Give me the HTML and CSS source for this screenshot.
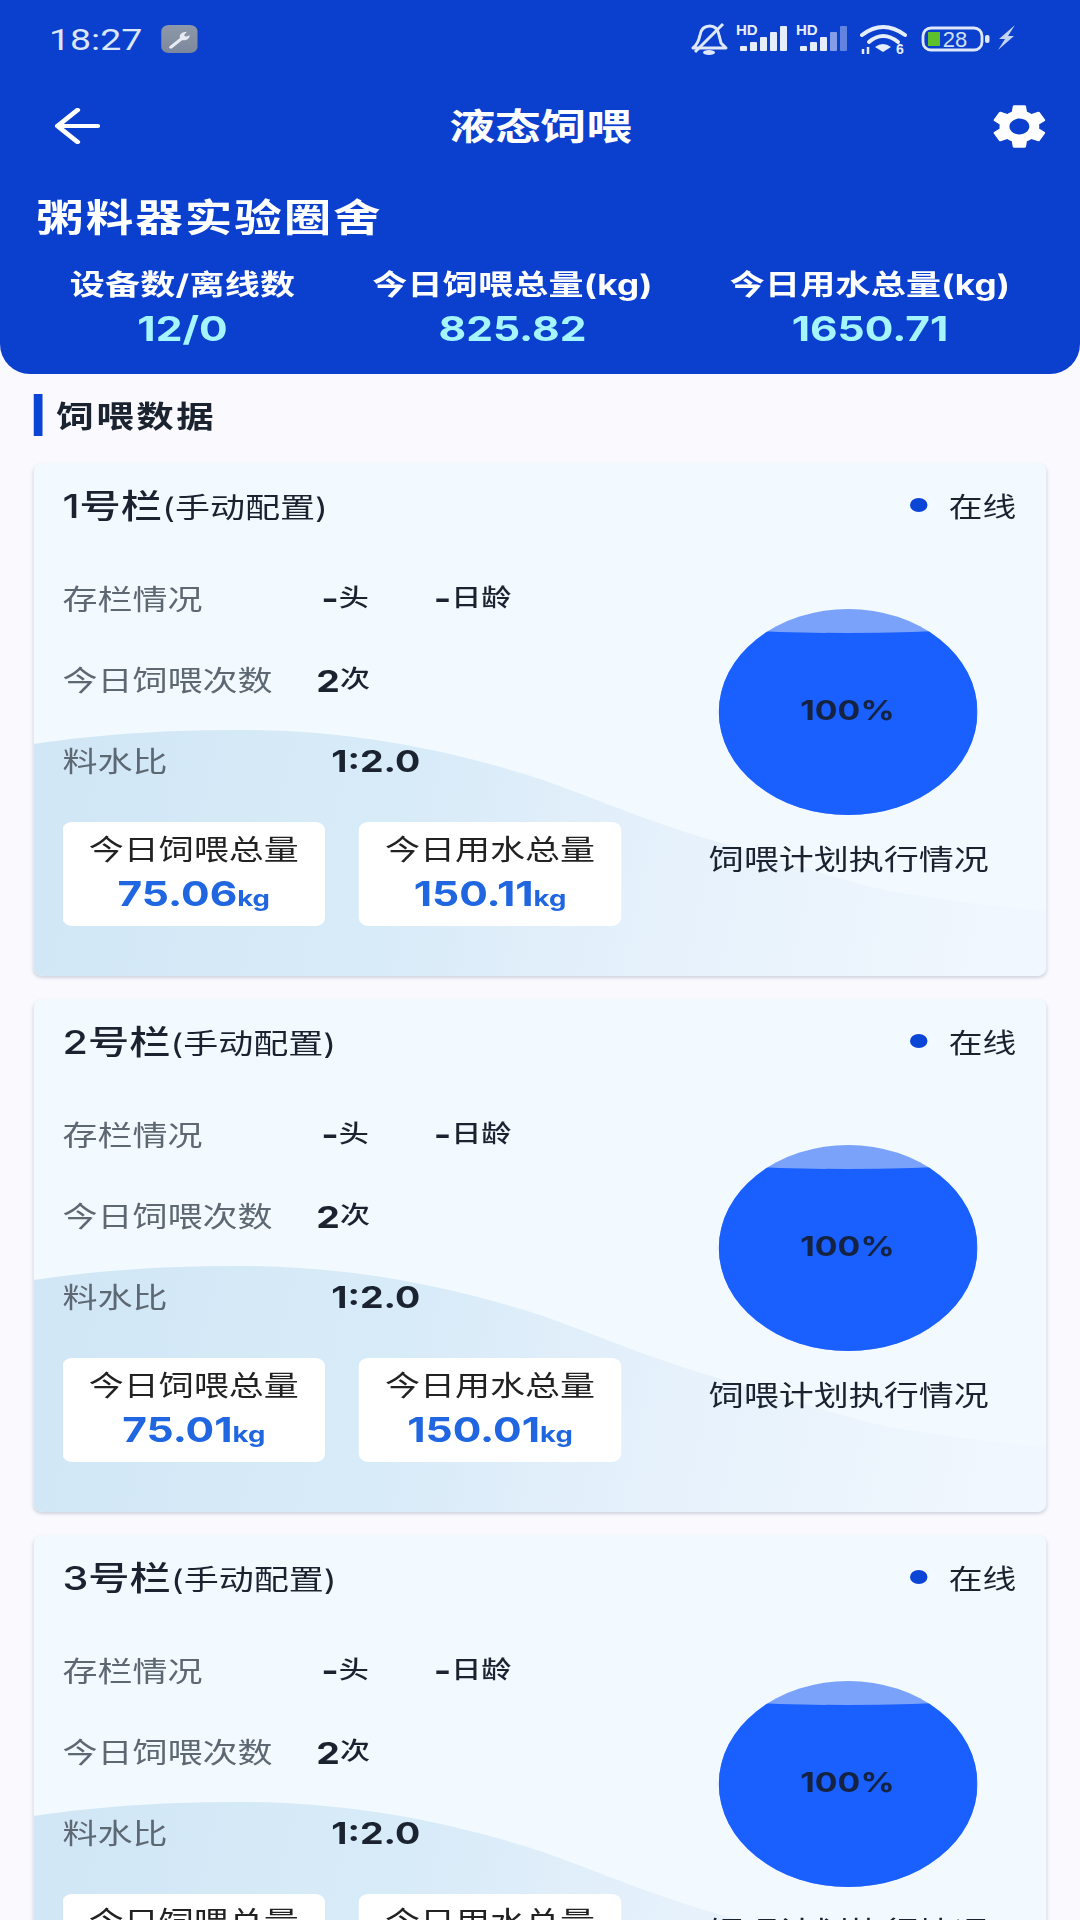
FILE: index.html
```html
<!DOCTYPE html>
<html>
  <head>
    <meta charset="utf-8">
    <title>液态饲喂</title>
    <link rel="stylesheet" href="styles.css">
  </head>

  <body>
    <div class="page">
      <div class="header">
        <div class="status-bar">
          <span class="time">18:27</span>
          <span class="tool-badge">
            <svg viewBox="0 0 24 24" width="22" height="22"><path d="M4 21 L13 12" stroke="#e8ecf2" stroke-width="3" stroke-linecap="round"/><path d="M12 11 C11 7 14 4 18 4 L15.5 7.5 L17 9.5 L20.5 8 C20.5 12 17 14.5 13.5 13 Z" fill="#e8ecf2"/></svg>
          </span>
          <svg class="status-icons" viewBox="0 0 330 36" preserveAspectRatio="none">
            <g fill="none" stroke="#dfe8fa" stroke-width="3" stroke-linejoin="round">
              <path d="M3 27 C8 23 9 19 10 14 C11 8 15 5 20 5 C25 5 28 9 29 14 L31 22 L36 27 Z"/>
              <path d="M5 31 L33 3"/>
            </g>
            <ellipse cx="19" cy="31.500" rx="6" ry="2.500" fill="#dfe8fa"/>

            <g fill="#e6edfb">
              <text class="hd" x="46" y="14">HD</text>
              <rect x="50" y="25" width="7" height="5" rx="1"/>
              <rect x="60" y="21" width="7" height="9" rx="1"/>
              <rect x="70" y="16" width="7" height="14" rx="1"/>
              <rect x="80" y="11" width="7" height="19" rx="1"/>
              <rect x="90" y="5" width="7" height="25" rx="1"/>
              <text class="hd" x="106" y="14">HD</text>
              <rect x="110" y="25" width="7" height="5" rx="1"/>
              <rect x="120" y="21" width="7" height="9" rx="1"/>
              <rect x="130" y="16" width="7" height="14" rx="1"/>
              <rect x="140" y="11" width="7" height="19" rx="1" opacity=".55"/>
              <rect x="150" y="5" width="7" height="25" rx="1" opacity=".4"/>
            </g>

            <g fill="none" stroke="#e6edfb" stroke-width="4" stroke-linecap="round">
              <path d="M172 14 Q193 -2 215 14"/>
              <path d="M179 21 Q193 9 208 21"/>
            </g>
            <path d="M185 26 Q193 20 201 26 L193 31 Z" fill="#e6edfb"/>
            <path d="M173 33 V28 M178 33 V26" stroke="#e6edfb" stroke-width="2.500"/>
            <text class="wifi-six" x="206" y="33">6</text>

            <rect x="233" y="7" width="59" height="22" rx="8" fill="none" stroke="#dfe8fa" stroke-width="2.800"/>
            <rect x="238" y="11" width="12" height="14" fill="#5ec02a"/>
            <text class="batt-num" x="265" y="25.500">28</text>
            <rect x="295" y="14" width="4.500" height="8" rx="2" fill="#dfe8fa"/>
            <path d="M325 4 L309 18 L315 18 L308 29 L324 15 L318 15 Z" fill="#c3d3f3"/>
          </svg>
        </div>

        <div class="nav">
          <svg class="back" viewBox="0 0 36 36" width="36" height="36"><path d="M34 18 H2 M18 2 L2 18 L18 34" fill="none" stroke="#fff" stroke-width="4.200" stroke-linecap="round" stroke-linejoin="round"/></svg>
          <span class="nav-title">液态饲喂</span>
          <svg class="gear" viewBox="0 0 24 24" width="53" height="53"><path fill="#fff" d="M19.14 12.94c.04-.3.06-.61.06-.94 0-.32-.02-.64-.07-.94l2.03-1.58a.49.49 0 0 0 .12-.61l-1.92-3.32a.488.488 0 0 0-.59-.22l-2.39.96c-.5-.38-1.03-.7-1.62-.94l-.36-2.54a.484.484 0 0 0-.48-.41h-3.84c-.24 0-.43.17-.47.41l-.36 2.54c-.59.24-1.13.57-1.62.94l-2.39-.96c-.22-.08-.47 0-.59.22L2.74 8.87c-.12.21-.08.47.12.61l2.03 1.58c-.05.3-.09.63-.09.94s.02.64.07.94l-2.03 1.58a.49.49 0 0 0-.12.61l1.92 3.32c.12.22.37.29.59.22l2.39-.96c.5.38 1.03.7 1.62.94l.36 2.54c.05.24.24.41.48.41h3.84c.24 0 .44-.17.47-.41l.36-2.54c.59-.24 1.13-.56 1.62-.94l2.39.96c.22.08.47 0 .59-.22l1.92-3.32c.12-.22.07-.47-.12-.61l-2.01-1.58zM12 15.6c-1.98 0-3.6-1.62-3.6-3.6s1.62-3.6 3.6-3.6 3.6 1.62 3.6 3.6-1.62 3.6-3.6 3.6z"/></svg>
        </div>

        <div class="farm-name">粥料器实验圈舍</div>

        <div class="stats">
          <div class="stat">
            <div class="stat-label">设备数/离线数</div>
            <div class="stat-value">12/0</div>
          </div>
          <div class="stat">
            <div class="stat-label">今日饲喂总量(kg)</div>
            <div class="stat-value">825.82</div>
          </div>
          <div class="stat">
            <div class="stat-label">今日用水总量(kg)</div>
            <div class="stat-value">1650.71</div>
          </div>
        </div>
      </div>

      <div class="section-title">饲喂数据</div>

      <div class="card">
        <div class="card-head">
          <div class="pen-name">1号栏<span class="pen-mode">(手动配置)</span></div>
          <div class="online"><i class="dot"></i>在线</div>
        </div>
        <div class="card-body">
          <div class="card-left">
            <div class="row">
              <span class="row-label">存栏情况</span>
              <span class="dash">-</span><span class="unit">头</span>
              <span class="dash second">-</span><span class="unit">日龄</span>
            </div>
            <div class="row">
              <span class="row-label">今日饲喂次数</span>
              <span class="count">2</span><span class="unit">次</span>
            </div>
            <div class="row">
              <span class="row-label">料水比</span>
              <span class="ratio">1:2.0</span>
            </div>
            <div class="boxes">
              <div class="box">
                <div class="box-label">今日饲喂总量</div>
                <div class="box-value">75.06<small>kg</small></div>
              </div>
              <div class="box">
                <div class="box-label">今日用水总量</div>
                <div class="box-value">150.11<small>kg</small></div>
              </div>
            </div>
          </div>
          <div class="card-right">
            <div class="ball"><span>100%</span></div>
            <div class="ball-caption">饲喂计划执行情况</div>
          </div>
        </div>
      </div>

      <div class="card">
        <div class="card-head">
          <div class="pen-name">2号栏<span class="pen-mode">(手动配置)</span></div>
          <div class="online"><i class="dot"></i>在线</div>
        </div>
        <div class="card-body">
          <div class="card-left">
            <div class="row">
              <span class="row-label">存栏情况</span>
              <span class="dash">-</span><span class="unit">头</span>
              <span class="dash second">-</span><span class="unit">日龄</span>
            </div>
            <div class="row">
              <span class="row-label">今日饲喂次数</span>
              <span class="count">2</span><span class="unit">次</span>
            </div>
            <div class="row">
              <span class="row-label">料水比</span>
              <span class="ratio">1:2.0</span>
            </div>
            <div class="boxes">
              <div class="box">
                <div class="box-label">今日饲喂总量</div>
                <div class="box-value">75.01<small>kg</small></div>
              </div>
              <div class="box">
                <div class="box-label">今日用水总量</div>
                <div class="box-value">150.01<small>kg</small></div>
              </div>
            </div>
          </div>
          <div class="card-right">
            <div class="ball"><span>100%</span></div>
            <div class="ball-caption">饲喂计划执行情况</div>
          </div>
        </div>
      </div>

      <div class="card">
        <div class="card-head">
          <div class="pen-name">3号栏<span class="pen-mode">(手动配置)</span></div>
          <div class="online"><i class="dot"></i>在线</div>
        </div>
        <div class="card-body">
          <div class="card-left">
            <div class="row">
              <span class="row-label">存栏情况</span>
              <span class="dash">-</span><span class="unit">头</span>
              <span class="dash second">-</span><span class="unit">日龄</span>
            </div>
            <div class="row">
              <span class="row-label">今日饲喂次数</span>
              <span class="count">2</span><span class="unit">次</span>
            </div>
            <div class="row">
              <span class="row-label">料水比</span>
              <span class="ratio">1:2.0</span>
            </div>
            <div class="boxes">
              <div class="box">
                <div class="box-label">今日饲喂总量</div>
              </div>
              <div class="box">
                <div class="box-label">今日用水总量</div>
              </div>
            </div>
          </div>
          <div class="card-right">
            <div class="ball"><span>100%</span></div>
            <div class="ball-caption">饲喂计划执行情况</div>
          </div>
        </div>
      </div>
    </div>
  </body>
</html>
```

FILE: styles.css
```css
html, body {
  margin: 0;
  height: 1920px;
  overflow: hidden;
  background-color: #faf9fe;
}

/* the whole screen is stretched sideways by 1.25, so everything below is in unstretched px */
.page {
  width: 864px;
  height: 1920px;
  overflow: hidden;
  transform: scaleX(1.25);
  transform-origin: 0 0;
  font-family: "Inter", "Noto Sans CJK SC", sans-serif;
  color: #1b2330;
}

/* header */
.header {
  height: 374px;
  box-sizing: border-box;
  background-color: #0b3fce;
  border-radius: 0 0 24px 24px / 0 0 30px 30px;
  color: #fff;
}

.status-bar {
  height: 78px;
  display: flex;
  align-items: center;
  padding: 0 48px 0 38px;
}

.time {
  width: 77px;
  font-family: "Roboto", sans-serif;
  font-size: 30px;
  color: #dbe6fb;
  text-align: center;
}

.tool-badge {
  width: 29px;
  height: 28px;
  margin-left: 14px;
  border-radius: 6px;
  background: linear-gradient(#8d98aa, #7d889c);
  display: flex;
  align-items: center;
  justify-content: center;
}

.status-icons {
  width: 264px;
  height: 36px;
  margin-left: auto;
}

.hd {
  font-family: "Liberation Sans", sans-serif;
  font-size: 15px;
  font-weight: 700;
}

.wifi-six {
  font-family: "Liberation Sans", sans-serif;
  font-size: 14px;
  font-weight: 700;
  fill: #e6edfb;
}

.batt-num {
  font-family: "Liberation Sans", sans-serif;
  font-size: 22px;
  fill: #cfe0f8;
  text-anchor: middle;
}

.nav {
  height: 96px;
  display: flex;
  align-items: center;
  justify-content: space-between;
  padding: 0 22px 0 44px;
}

.nav-title {
  margin: -4px 0 0 -4px;
  font-family: "Noto Sans CJK SC", sans-serif;
  font-size: 36.500px;
  font-weight: 700;
}

.farm-name {
  margin-top: 14px;
  padding-left: 29px;
  font-family: "Noto Sans CJK SC", sans-serif;
  font-size: 38px;
  line-height: 54px;
  font-weight: 700;
  letter-spacing: 1.600px;
}

.stats {
  margin-top: 23px;
  display: grid;
  grid-template-columns: 292px 236px 336px;
}

.stat {
  text-align: center;
}

.stat-label {
  font-size: 28px;
  line-height: 40px;
  font-weight: 700;
  letter-spacing: .2px;
  white-space: nowrap;
}

.stat-value {
  padding-top: 1px;
  font-size: 34px;
  line-height: 46px;
  font-weight: 700;
  color: #a5f5ff;
}

/* section heading */
.section-title {
  margin: 20px 0 27px 27px;
  border-left: 7px solid #0b45d6;
  padding-left: 11px;
  font-family: "Noto Sans CJK SC", sans-serif;
  font-size: 30px;
  line-height: 40px;
  padding-bottom: 2px;
  font-weight: 700;
  letter-spacing: 2px;
}

/* pen cards */
.card {
  position: relative;
  width: 810px;
  height: 513px;
  box-sizing: border-box;
  margin: 0 0 23px 27px;
  padding: 23px 24px 0 23px;
  border-radius: 8px;
  background-color: #f2f9ff;
  box-shadow: 0 2px 3px rgba(60, 80, 110, .22);
  overflow: hidden;
}

.card::before {
  content: "";
  position: absolute;
  inset: 0;
  background: linear-gradient(100deg, #d0e6f5 0%, #d8ebf8 40%, #e6f1fb 65%, #f0f7fe 95%);
  clip-path: path("M0 281 C60 270 110 267 165 267 C260 267 340 290 405 316 C450 336 500 362 542 377 C590 395 640 415 681 427 C720 436 770 444 810 448 L810 513 L0 513 Z");
}

.card-head,
.card-body {
  position: relative;
}

.card-head {
  height: 36px;
  display: flex;
  align-items: center;
  justify-content: space-between;
}

.pen-name {
  font-size: 33px;
  font-weight: 500;
  white-space: nowrap;
}

.pen-mode {
  font-size: 28px;
  font-weight: 400;
}

.online {
  margin-top: 2px;
  display: flex;
  align-items: center;
  font-size: 27px;
}

.dot {
  width: 14px;
  height: 14px;
  margin-right: 17px;
  border-radius: 50%;
  background-color: #0b45d6;
}

.card-body {
  margin-top: 37px;
  display: flex;
}

.card-left {
  width: 494px;
}

.row {
  height: 81px;
  display: flex;
  align-items: center;
  white-space: nowrap;
}

.row-label {
  width: 203px;
  margin-top: -3px;
  font-size: 28px;
  color: #5d6873;
}

.dash {
  margin: -4px 0 0 4px;
  font-size: 30px;
  font-weight: 700;
  line-height: 1;
}

.dash.second {
  margin-left: 52px;
}

.unit {
  margin-bottom: 8px;
  font-size: 24px;
  font-weight: 500;
}

.count {
  font-size: 30px;
  font-weight: 700;
}

.ratio {
  margin: -1px 0 0 12px;
  font-size: 30px;
  font-weight: 700;
}

.boxes {
  margin-top: 20px;
  display: flex;
  gap: 27px;
}

.box {
  width: 210px;
  height: 104px;
  box-sizing: border-box;
  padding-top: 10px;
  border-radius: 8px;
  background-color: #fff;
  text-align: center;
}

.box-label {
  font-size: 28px;
  line-height: 36px;
  color: #222;
}

.box-value {
  margin-top: 6px;
  font-size: 34px;
  line-height: 40px;
  font-weight: 700;
  color: #1f66e0;
  white-space: nowrap;
}

.box-value small {
  font-size: 22px;
}

.card-right {
  width: 222px;
  margin-left: 23px;
  padding-top: 50px;
  text-align: center;
}

.ball {
  position: relative;
  width: 207px;
  height: 206px;
  margin: 0 auto;
  border-radius: 50%;
  background-color: #7aa2fb;
  overflow: hidden;
  display: flex;
  align-items: center;
  justify-content: center;
}

/* the water level, its top edge sags slightly */
.ball::before {
  content: "";
  position: absolute;
  inset: 20px 0 0 0;
  background-color: #1a5fff;
  clip-path: path("M0 0 Q103 8 207 0 L207 186 L0 186 Z");
}

.ball span {
  position: relative;
  margin-top: -4px;
  font-size: 27px;
  font-weight: 700;
  color: #14233f;
}

.ball-caption {
  margin-top: 27px;
  font-size: 28px;
  line-height: 36px;
  white-space: nowrap;
}
```
